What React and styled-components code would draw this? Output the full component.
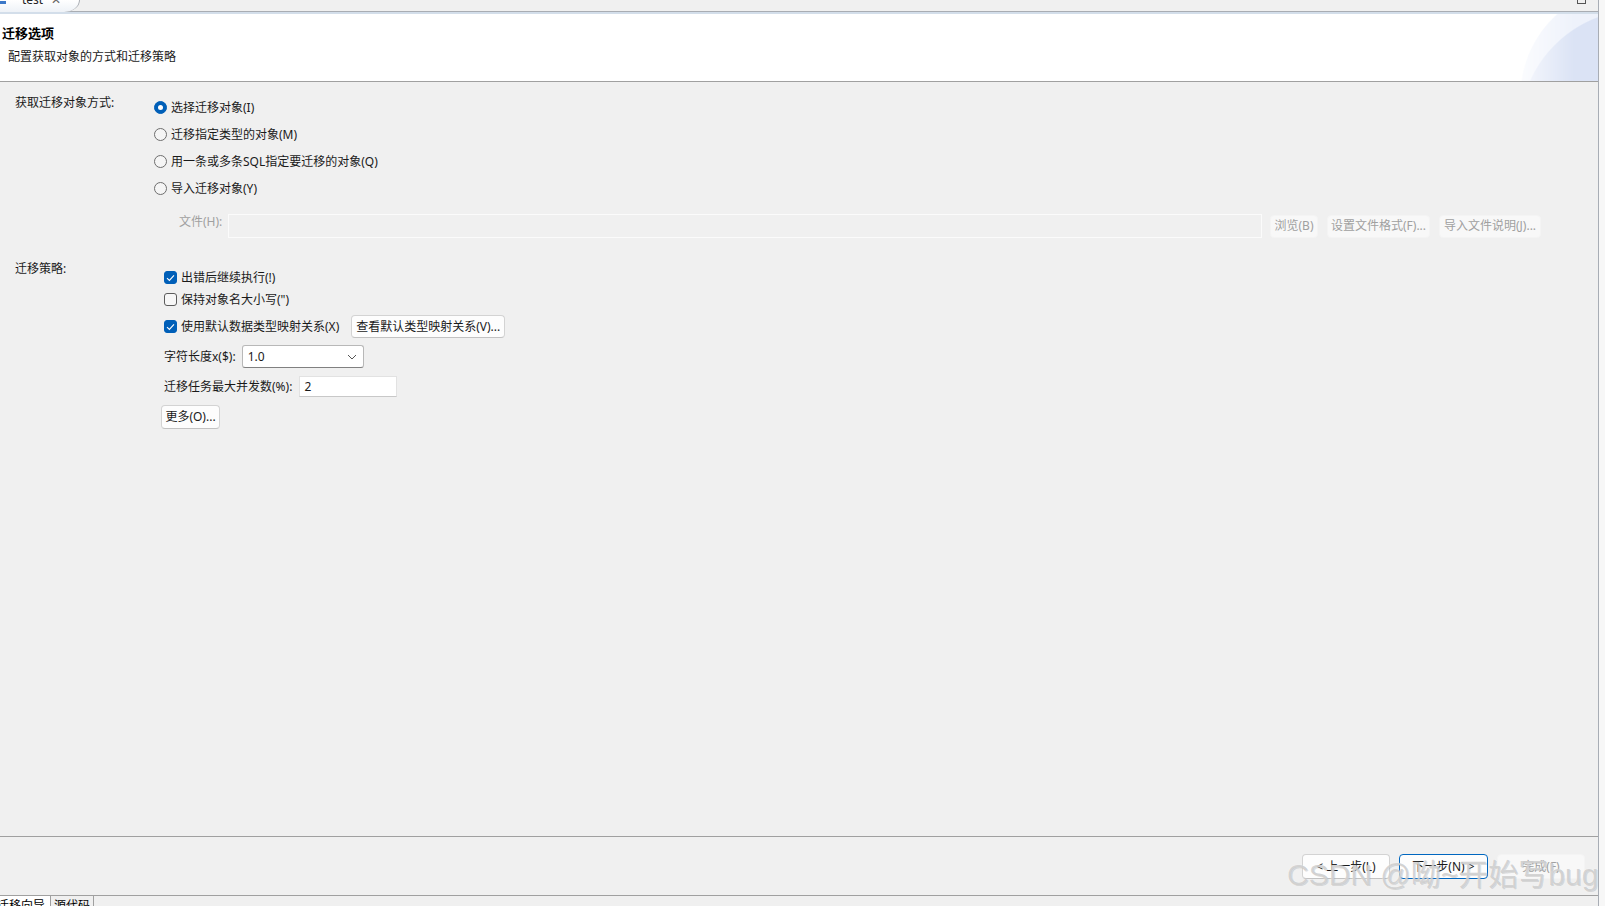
import React from "react";
import styled, { createGlobalStyle } from "styled-components";

const GlobalStyle = createGlobalStyle`
  html, body {
    margin: 0;
    padding: 0;
    background: #f7f7f7;
  }
  body {
    font-family: "Noto Sans", "Noto Sans CJK SC", sans-serif;
    font-size: 12px;
    color: #1a1a1a;
  }
  * {
    box-sizing: border-box;
  }
`;

const Window = styled.div`
  position: relative;
  display: flex;
  width: 1605px;
  height: 906px;
  overflow: hidden;
  background: #f7f7f7;
`;

const Frame = styled.div`
  width: 1599px;
  display: flex;
  flex-direction: column;
  background: #f0f0f0;
  border-right: 1px solid #a8adb5;
`;

const TabStrip = styled.div`
  position: relative;
  height: 12px;
  display: flex;
  background: #f0f0f0;
  border-bottom: 1px solid #a9adb3;
`;

const EditorTab = styled.div`
  position: relative;
  width: 80px;
  height: 12px;
  margin-bottom: -1px;
  display: flex;
  align-items: flex-start;
  overflow: hidden;
  background: linear-gradient(#ffffff, #eef2f7);
  border-right: 1px solid #a9adb3;
  border-bottom-right-radius: 16px 12px;
`;

const TabIcon = styled.span`
  width: 6px;
  height: 3px;
  margin-top: 1px;
  background: #3c78c8;
`;

const TabText = styled.span`
  margin: -8px 0 0 16px;
  line-height: 16px;
  font-size: 12px;
  color: #222;
`;

const TabClose = styled.span`
  margin: -8px 0 0 8px;
  line-height: 16px;
  font-size: 12px;
  color: #666;
`;

const MaxIcon = styled.span`
  position: absolute;
  right: 12px;
  top: -4px;
  width: 9px;
  height: 8px;
  border: 1px solid #555;
`;

const Header = styled.header`
  position: relative;
  height: 70px;
  padding: 10px 0 0 2px;
  background: #ffffff;
  border-top: 2px solid #d3deea;
  border-bottom: 1px solid #a0a0a0;
  overflow: hidden;

  &::after {
    content: "";
    position: absolute;
    right: 0;
    top: 0;
    width: 95px;
    height: 100%;
    background:
      radial-gradient(circle 121px at 137px 116px, #dbe3f5 99%, transparent 100%),
      radial-gradient(circle 110px at 127px 82px, #eef2fb 99%, transparent 100%);
    -webkit-mask-image: linear-gradient(to right, transparent, #000 75%);
    mask-image: linear-gradient(to right, transparent, #000 75%);
  }
`;

const Title = styled.div`
  line-height: 18px;
  font-size: 13px;
  font-weight: 700;
  color: #000;
`;

const Subtitle = styled.div`
  margin-top: 6px;
  padding-left: 6px;
  line-height: 18px;
  font-size: 12px;
  color: #1a1a1a;
`;

const Body = styled.main`
  flex: 1;
  padding: 12px 57px 0 15px;
`;

const Section = styled.section`
  display: grid;
  grid-template-columns: 139px 1fr;
  margin-top: ${(p) => p.$gap || 0}px;
`;

const SectionLabel = styled.div`
  line-height: 18px;
`;

const Column = styled.div`
  display: flex;
  flex-direction: column;
  padding-top: ${(p) => p.$top || 0}px;
  padding-left: ${(p) => p.$indent || 0}px;
`;

const OptionRow = styled.label`
  display: flex;
  align-items: center;
  gap: 4px;
  height: ${(p) => p.$h || 27}px;
  margin-top: ${(p) => p.$mt || 0}px;
  line-height: 16px;
`;

const Radio = styled.span`
  width: 13px;
  height: 13px;
  border-radius: 50%;
  flex: none;
  border: 1px solid ${(p) => (p.$on ? "#005fb8" : "#6e6e6e")};
  background: ${(p) => (p.$on ? "#005fb8" : "#f5f5f5")};
  display: flex;
  align-items: center;
  justify-content: center;

  &::after {
    content: "";
    width: 5px;
    height: 5px;
    border-radius: 50%;
    background: #fff;
    display: ${(p) => (p.$on ? "block" : "none")};
  }
`;

const Check = styled.span`
  width: 13px;
  height: 13px;
  flex: none;
  border-radius: 3px;
  border: 1px solid ${(p) => (p.$on ? "#005fb8" : "#5c5c5c")};
  background: ${(p) => (p.$on ? "#005fb8" : "#f7f7f7")};
  display: flex;
  align-items: center;
  justify-content: center;
`;

const FileRow = styled.div`
  display: flex;
  align-items: center;
  height: 24px;
  margin-top: 12px;
  padding-left: 25px;
`;

const DimLabel = styled.span`
  margin: -9px 6px 0 0;
  color: #a0a0a0;
  line-height: 16px;
`;

const DimInput = styled.div`
  flex: 1;
  height: 24px;
  background: #f0f0f0;
  border: 1px solid #fbfbfb;
  margin-right: 8px;
`;

const ButtonGroup = styled.div`
  display: flex;
  gap: ${(p) => p.$gap || 9}px;
`;

const Button = styled.button`
  height: ${(p) => p.$h || 23}px;
  width: ${(p) => p.$w}px;
  padding: 0;
  font-family: inherit;
  font-size: 12px;
  line-height: 16px;
  border-radius: 4px;
  white-space: nowrap;
  color: ${(p) => (p.disabled ? "#a0a0a0" : "#1a1a1a")};
  background: ${(p) => (p.disabled ? "#f8f8f8" : "#fdfdfd")};
  border: ${(p) =>
    p.$focus
      ? "1.5px solid #0067c0"
      : p.disabled
      ? "1px solid #f4f4f4"
      : "1px solid #d3d3d3"};
  border-bottom-color: ${(p) =>
    p.$focus ? "#0067c0" : p.disabled ? "#f4f4f4" : "#c2c2c2"};
  margin-left: ${(p) => p.$ml || 0}px;
`;

const FieldRow = styled.div`
  display: flex;
  align-items: center;
  gap: ${(p) => p.$gap || 4}px;
  margin-top: ${(p) => p.$mt || 0}px;
  line-height: 16px;
`;

const Combo = styled.div`
  width: 122px;
  height: 23px;
  padding: 0 6px 0 5px;
  display: flex;
  align-items: center;
  justify-content: space-between;
  background: #fff;
  border: 1px solid #b8b8b8;
  border-bottom-color: #808080;
  border-radius: 3px;
`;

const TextBox = styled.div`
  width: 98px;
  height: 21px;
  padding: 0 4px;
  display: flex;
  align-items: center;
  background: #fff;
  border: 1px solid #e2e2e2;
  border-bottom-color: #c8c8c8;
`;

const ButtonBar = styled.footer`
  height: 59px;
  padding: 17px 13px 0 0;
  display: flex;
  justify-content: flex-end;
  border-top: 1px solid #a0a0a0;
`;

const BottomTabs = styled.div`
  height: 11px;
  display: flex;
  border-top: 1px solid #a0a0a0;
  overflow: hidden;
`;

const BottomTab = styled.div`
  width: ${(p) => p.$w}px;
  height: 14px;
  padding: 2px 0 0 ${(p) => p.$pl}px;
  line-height: 16px;
  font-size: 12px;
  color: #000;
  white-space: nowrap;
  background: ${(p) => (p.$active ? "#fff" : "#f0f0f0")};
  border-right: 1px solid #a0a0a0;
  overflow: hidden;
`;

const Watermark = styled.div`
  position: absolute;
  left: 1287px;
  top: 857px;
  font-family: "Liberation Sans", "Noto Sans CJK SC", sans-serif;
  font-size: 30px;
  line-height: 36px;
  white-space: nowrap;
  color: rgba(160, 160, 160, 0.45);
  text-shadow: 0 0 1px rgba(255, 255, 255, 0.9), 1px 1px 0 rgba(120, 120, 120, 0.25);
  pointer-events: none;
`;

const Tick = () => (
  <svg width="9" height="8" viewBox="0 0 9 8">
    <path d="M1 4.2 L3.4 6.4 L8 1.4" fill="none" stroke="#fff" strokeWidth="1.1" />
  </svg>
);

const Chevron = () => (
  <svg width="10" height="6" viewBox="0 0 10 6">
    <path d="M1 1 L5 5 L9 1" fill="none" stroke="#555" strokeWidth="1" />
  </svg>
);

const radios = [
  { text: "选择迁移对象(I)", on: true },
  { text: "迁移指定类型的对象(M)" },
  { text: "用一条或多条SQL指定要迁移的对象(Q)" },
  { text: "导入迁移对象(Y)" },
];

export default function App() {
  return (
    <>
      <GlobalStyle />
      <Window>
        <Frame>
          <TabStrip>
            <EditorTab>
              <TabIcon />
              <TabText>test</TabText>
              <TabClose>✕</TabClose>
            </EditorTab>
            <MaxIcon />
          </TabStrip>

          <Header>
            <Title>迁移选项</Title>
            <Subtitle>配置获取对象的方式和迁移策略</Subtitle>
          </Header>

          <Body>
            <Section>
              <SectionLabel>获取迁移对象方式:</SectionLabel>
              <Column>
                {radios.map((r) => (
                  <OptionRow key={r.text}>
                    <Radio $on={r.on} />
                    {r.text}
                  </OptionRow>
                ))}
                <FileRow>
                  <DimLabel>文件(H):</DimLabel>
                  <DimInput />
                  <ButtonGroup>
                    <Button disabled $w={48}>浏览(B)</Button>
                    <Button disabled $w={103}>设置文件格式(F)...</Button>
                    <Button disabled $w={102}>导入文件说明(J)...</Button>
                  </ButtonGroup>
                </FileRow>
              </Column>
            </Section>

            <Section $gap={22}>
              <SectionLabel>迁移策略:</SectionLabel>
              <Column $top={6} $indent={10}>
                <OptionRow $h={23}>
                  <Check $on>
                    <Tick />
                  </Check>
                  出错后继续执行(!)
                </OptionRow>
                <OptionRow $h={21}>
                  <Check />
                  保持对象名大小写(")
                </OptionRow>
                <FieldRow $mt={5}>
                  <OptionRow $h={23}>
                    <Check $on>
                      <Tick />
                    </Check>
                    使用默认数据类型映射关系(X)
                  </OptionRow>
                  <Button $ml={8} $w={154}>查看默认类型映射关系(V)...</Button>
                </FieldRow>
                <FieldRow $mt={7} $gap={6}>
                  字符长度x($):
                  <Combo>
                    1.0
                    <Chevron />
                  </Combo>
                </FieldRow>
                <FieldRow $mt={8} $gap={7}>
                  迁移任务最大并发数(%):
                  <TextBox>2</TextBox>
                </FieldRow>
                <FieldRow $mt={8}>
                  <Button $ml={-3} $w={59} $h={24}>更多(O)...</Button>
                </FieldRow>
              </Column>
            </Section>
          </Body>

          <ButtonBar>
            <ButtonGroup $gap={9}>
              <Button $w={88} $h={25}>&lt; 上一步(L)</Button>
              <Button $w={89} $h={25} $focus>下一步(N) &gt;</Button>
              <Button $w={88} $h={25} disabled>完成(F)</Button>
            </ButtonGroup>
          </ButtonBar>

          <BottomTabs>
            <BottomTab $active $w={51} $pl={0}>
              <span style={{ marginLeft: -3 }}>迁移向导</span>
            </BottomTab>
            <BottomTab $w={43} $pl={3}>源代码</BottomTab>
          </BottomTabs>
        </Frame>
        <Watermark>CSDN @呦~开始写bug</Watermark>
      </Window>
    </>
  );
}
